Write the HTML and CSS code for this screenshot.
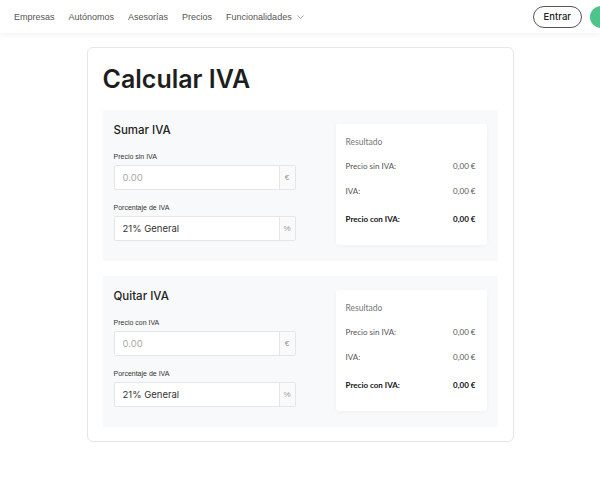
FILE: index.html
```html
<!DOCTYPE html>
<html lang="es">
<head>
    <meta charset="UTF-8">
    <title>Calcular IVA</title>
    <link rel="stylesheet" href="styles.css">
</head>
<body>
<header class="topbar">
    <nav class="nav">
        <a href="#">Empresas</a>
        <a href="#">Autónomos</a>
        <a href="#">Asesorías</a>
        <a href="#">Precios</a>
        <a href="#">Funcionalidades <svg class="chev" width="7" height="4" viewBox="0 0 7 4"><path d="M0.5 0.5 L3.5 3.5 L6.5 0.5" fill="none" stroke="#999" stroke-width="0.9"/></svg></a>
    </nav>
    <div class="actions">
        <a href="#" class="btn-login">Entrar</a>
        <span class="btn-green"></span>
    </div>
</header>

<main class="card">
    <h1>Calcular IVA</h1>

    <section class="calc">
        <div class="form">
            <h2>Sumar IVA</h2>
            <label>Precio sin IVA</label>
            <div class="field"><input type="text" placeholder="0.00"><span class="suffix">€</span></div>
            <label>Porcentaje de IVA</label>
            <div class="field"><input type="text" value="21% General"><span class="suffix">%</span></div>
        </div>
        <div class="result">
            <div class="result-title">Resultado</div>
            <div class="row"><span>Precio sin IVA:</span><span>0,00 €</span></div>
            <div class="row"><span>IVA:</span><span>0,00 €</span></div>
            <div class="row total"><span>Precio con IVA:</span><span>0,00 €</span></div>
        </div>
    </section>

    <section class="calc">
        <div class="form">
            <h2>Quitar IVA</h2>
            <label>Precio con IVA</label>
            <div class="field"><input type="text" placeholder="0.00"><span class="suffix">€</span></div>
            <label>Porcentaje de IVA</label>
            <div class="field"><input type="text" value="21% General"><span class="suffix">%</span></div>
        </div>
        <div class="result">
            <div class="result-title">Resultado</div>
            <div class="row"><span>Precio sin IVA:</span><span>0,00 €</span></div>
            <div class="row"><span>IVA:</span><span>0,00 €</span></div>
            <div class="row total"><span>Precio con IVA:</span><span>0,00 €</span></div>
        </div>
    </section>
</main>
</body>
</html>
```
FILE: styles.css
```css
body { margin: 0; background: #ffffff; font-family: "Liberation Sans", "Inter", sans-serif; color: #222222; }
a { text-decoration: none; color: inherit; }

.topbar { height: 33px; display: flex; align-items: center; justify-content: space-between; padding-left: 14px; background: #ffffff; box-shadow: 0 2px 6px rgba(0,0,0,0.05); }
.nav { display: flex; gap: 14px; font-size: 9px; color: #555555; }
.nav a { display: flex; align-items: center; gap: 5px; }
.actions { display: flex; align-items: center; gap: 8px; margin-right: -12px; }
.btn-login { display: block; height: 20px; line-height: 20px; padding: 0 10px; border: 1px solid #555555; border-radius: 12px; font-family: "Inter", sans-serif; font-size: 9.5px; font-weight: 500; color: #222222; }
.btn-green { display: block; width: 22px; height: 22px; border-radius: 11px; background: #4cc48a; }

.card { width: 395px; margin: 14px auto 0; padding: 14px 15px 14px; background: #ffffff; border: 1px solid #e6e6e6; border-radius: 6px; }
h1 { margin: 0 0 14px; font-family: "Inter", "Liberation Sans", sans-serif; font-size: 25px; font-weight: 600; color: #1e1e1e; line-height: 34px; }

.calc { display: flex; justify-content: space-between; padding: 14px 11px 16px; background: #f8f9fa; margin-bottom: 15px; }
.calc:last-child { margin-bottom: 0; }
.form { width: 182px; padding-bottom: 4px; }
h2 { margin: -1px 0 14px; font-family: "Inter", "Liberation Sans", sans-serif; font-size: 11.5px; font-weight: 500; color: #222222; line-height: 15px; }
label { display: block; font-size: 7px; line-height: 9px; font-weight: 500; color: #333333; margin-bottom: 4px; }
.field { display: flex; height: 25px; border: 1px solid #e4e6e8; background: #ffffff; border-radius: 2px; margin-bottom: 13px; box-sizing: border-box; }
.field:last-child { margin-bottom: 0; }
.field input { flex: 1; min-width: 0; border: none; outline: none; padding: 0 8px; font-family: "Inter", "Liberation Sans", sans-serif; font-size: 9.5px; color: #333333; background: transparent; }
.field input::placeholder { color: #aaaaaa; }
.suffix { width: 15px; border-left: 1px solid #e4e6e8; background: #fafafa; display: flex; align-items: center; justify-content: center; font-size: 8px; color: #999999; }

.result { width: 151px; box-sizing: border-box; padding: 13px 11px 21px 10px; background: #ffffff; border-radius: 3px; box-shadow: 0 1px 4px rgba(0,0,0,0.04); align-self: flex-start; font-family: "Lato", "Liberation Sans", sans-serif; }
.result-title { font-size: 8.5px; line-height: 11px; color: #777777; margin-bottom: 13px; }
.row { display: flex; justify-content: space-between; font-size: 8px; line-height: 10px; color: #555555; margin-bottom: 15px; }
.row.total { font-weight: 700; color: #111111; margin-bottom: 0; padding-top: 3px; }
```
